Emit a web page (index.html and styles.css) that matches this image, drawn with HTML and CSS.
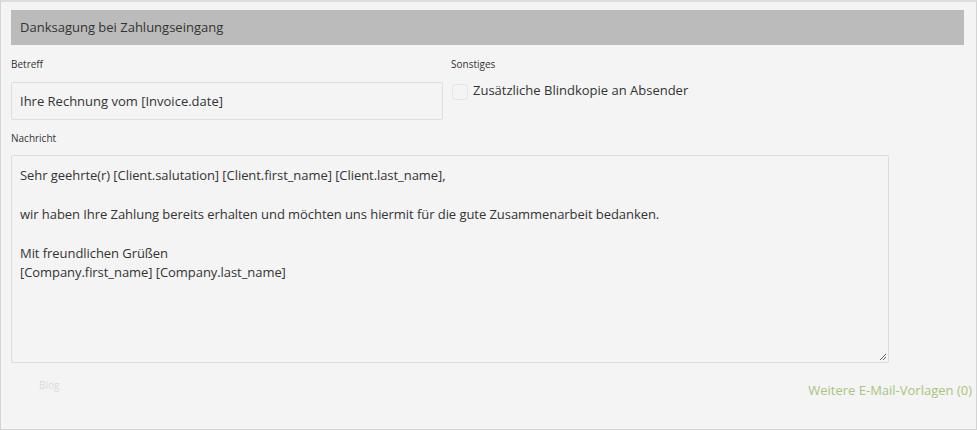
FILE: index.html
```html
<!DOCTYPE html>
<html lang="de">
<head>
<meta charset="utf-8">
<link rel="stylesheet" href="styles.css">
</head>
<body>
<div class="frame">
  <div class="header">Danksagung bei Zahlungseingang</div>
  <div class="row">
    <div class="col-left">
      <div class="label">Betreff</div>
      <div class="input">Ihre Rechnung vom [Invoice.date]</div>
    </div>
    <div class="col-right">
      <div class="label">Sonstiges</div>
      <div class="check-row">
        <span class="checkbox"></span>
        <span class="check-label">Zusätzliche Blindkopie an Absender</span>
      </div>
    </div>
  </div>
  <div class="label label-msg">Nachricht</div>
  <div class="textarea">
    <p>Sehr geehrte(r) [Client.salutation] [Client.first_name] [Client.last_name],</p>
    <p>&nbsp;</p>
    <p>wir haben Ihre Zahlung bereits erhalten und möchten uns hiermit für die gute Zusammenarbeit bedanken.</p>
    <p>&nbsp;</p>
    <p>Mit freundlichen Grüßen</p>
    <p>[Company.first_name] [Company.last_name]</p>
    <svg class="grip" width="8" height="8" viewBox="0 0 8 8"><path d="M7 1 L1 7 M7 4 L4 7" stroke="#666" stroke-width="1"/></svg>
  </div>
  <div class="footer">
    <span class="blog">Blog</span>
    <span class="more">Weitere E-Mail-Vorlagen (0)</span>
  </div>
</div>
</body>
</html>
```

FILE: styles.css
```css
html, body {
  margin: 0;
  padding: 0;
  background: #f4f4f4;
}
body {
  font-family: "Open Sans", "Noto Sans", sans-serif;
  color: #333;
}
.frame {
  box-sizing: border-box;
  width: 977px;
  height: 430px;
  border: 1px solid #d4d4d4;
  border-top: 2px solid #dcdcdc;
  padding: 8px 12px 0 10px;
  background: #f4f4f4;
}
.header {
  height: 35px;
  background: #bbbbbb;
  font-size: 13px;
  line-height: 35px;
  padding-left: 9px;
  color: #333;
}
.row {
  display: flex;
}
.col-left {
  width: 432px;
}
.col-right {
  margin-left: 8px;
}
.label {
  font-size: 10px;
  line-height: 14px;
  margin-top: 12px;
  margin-bottom: 11px;
  color: #333;
}
.input {
  box-sizing: border-box;
  height: 38px;
  border: 1px solid #dedede;
  border-radius: 2px;
  font-size: 13px;
  line-height: 36px;
  padding-left: 8px;
  background: #f4f4f4;
}
.check-row {
  display: flex;
  align-items: flex-start;
  padding-left: 1px;
}
.checkbox {
  box-sizing: border-box;
  width: 16px;
  height: 16px;
  border: 1px solid #e6e6e6;
  border-radius: 2px;
  margin-top: 2px;
}
.check-label {
  font-size: 13px;
  line-height: 16px;
  margin-left: 5px;
}
.label-msg {
  margin-top: 11px;
  margin-bottom: 10px;
}
.textarea {
  position: relative;
  box-sizing: border-box;
  width: 878px;
  height: 208px;
  border: 1px solid #dcdcdc;
  border-radius: 2px;
  padding: 10px 8px;
  font-size: 13px;
  letter-spacing: -0.06px;
  line-height: 19.4px;
  background: #f4f4f4;
}
.textarea p {
  margin: 0;
}
.grip {
  position: absolute;
  right: 1px;
  bottom: 1px;
}
.footer {
  display: flex;
  justify-content: space-between;
  align-items: flex-start;
  padding-left: 28px;
  margin-right: -8px;
}
.blog {
  font-size: 10px;
  color: #dadada;
  margin-top: 15px;
}
.more {
  font-size: 13px;
  color: #a7c67d;
  margin-top: 18px;
}
```
